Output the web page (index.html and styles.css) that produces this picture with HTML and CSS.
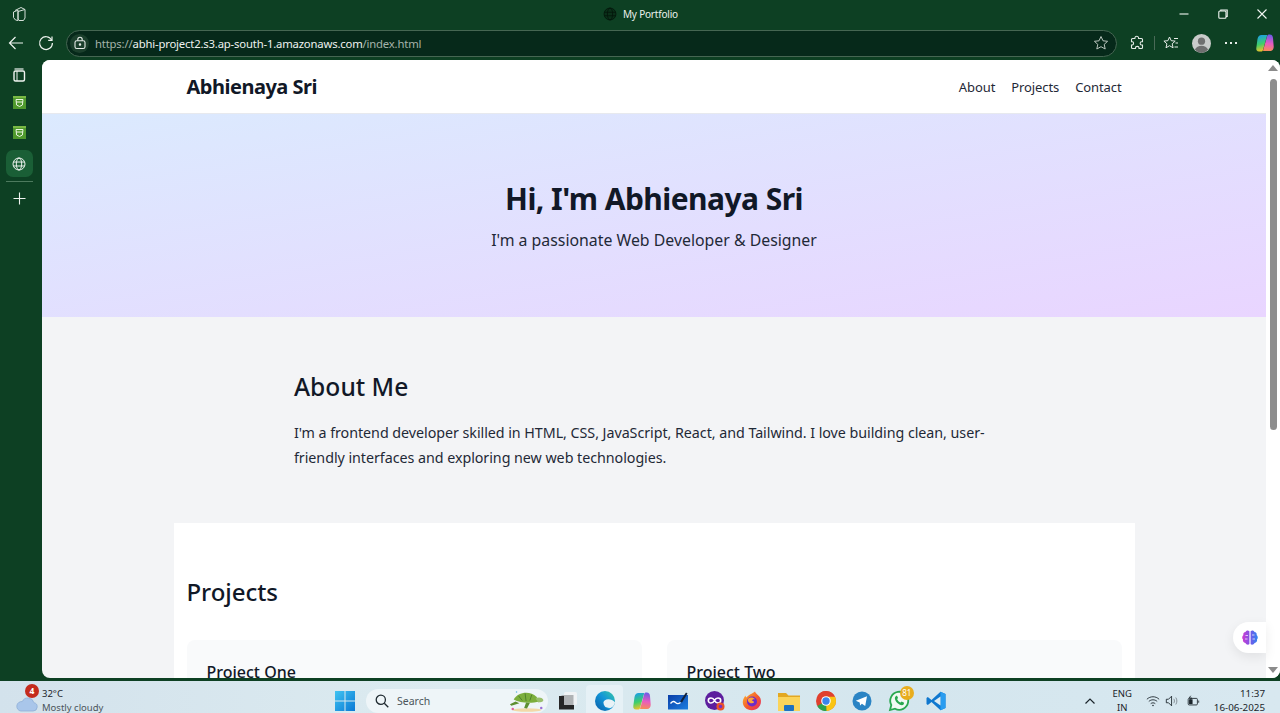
FILE: index.html
```html
<!DOCTYPE html>
<html lang="en">
<head>
<meta charset="utf-8">
<title>My Portfolio</title>
<link rel="stylesheet" href="styles.css">
</head>
<body>
<div class="window">
  <div class="titlebar">
    <div class="title-left">
      <svg class="ic18" viewBox="0 0 18 18" fill="none" stroke="#d5e0d9" stroke-width="1"><path d="M8 6.500l7-2v8.500l-1.500 2.500H9l-1-1.500z"/><path d="M5 5.500l6-3 4 2"/><path d="M3.500 7 8 5.200v10.300l-2.500-.5-2-2.500z"/></svg>
    </div>
    <div class="title-center">
      <svg class="ic14" viewBox="0 0 16 16" fill="#0a3019" stroke="#04170b" stroke-width="1"><circle cx="8" cy="8" r="6.800"/><ellipse cx="8" cy="8" rx="3" ry="6.800" fill="none"/><path d="M1.500 6h13M1.500 10h13" fill="none"/></svg>
      <span>My Portfolio</span>
    </div>
    <div class="win-controls">
      <svg class="ic12" viewBox="0 0 12 12" stroke="#f2f6f3" fill="none" stroke-width="1.100"><path d="M1.500 6h9"/></svg>
      <svg class="ic12" viewBox="0 0 12 12" stroke="#f2f6f3" fill="none" stroke-width="1.100"><rect x="1.800" y="3" width="7.200" height="7.200" rx="1"/><path d="M3.800 3V2h6.400v6.400H9"/></svg>
      <svg class="ic12" viewBox="0 0 12 12" stroke="#f2f6f3" fill="none" stroke-width="1.100"><path d="m1.500 1.500 9 9M10.500 1.500l-9 9"/></svg>
    </div>
  </div>
  <div class="toolbar">
    <svg class="ic16 back" viewBox="0 0 16 16" fill="none" stroke="#eef3ef" stroke-width="1.200"><path d="M15 8H1.500M7.500 2 1.500 8l6 6"/></svg>
    <svg class="ic16 reload" viewBox="0 0 16 16" fill="none" stroke="#eef3ef" stroke-width="1.200"><path d="M13.600 5A6.400 6.400 0 1 0 14.400 8"/><path d="M14 1.500V5.300h-3.800"/></svg>
    <div class="address">
      <span class="lock">
        <svg class="ic14" viewBox="0 0 14 14" fill="none" stroke="#e6ece8" stroke-width="1.100"><rect x="2" y="4.800" width="10" height="7.700" rx="1.800"/><path d="M4.800 4.800V3.500a2.200 2.200 0 0 1 4.400 0v1.300"/><circle cx="7" cy="8.600" r=".7" fill="#e6ece8"/></svg>
      </span>
      <span class="url"><span class="dim">https://</span>abhi-project2.s3.ap-south-1.amazonaws.com<span class="dim">/index.html</span></span>
      <svg class="ic16 star" viewBox="0 0 16 16" fill="none" stroke="#b8c4bc" stroke-width="1"><path d="m8 1.500 2 4.300 4.600.5-3.400 3.100 1 4.600L8 11.700l-4.200 2.300 1-4.600L1.400 6.300 6 5.800z"/></svg>
    </div>
    <div class="tools">
      <svg class="ic16" viewBox="0 0 16 16" fill="none" stroke="#e6ece8" stroke-width="1.100"><path d="M6 2.500c.3-1.600 3.200-1.600 3.500 0l.1 1h2.900c.6 0 1 .4 1 1v2.300h-1c-1.800 0-1.800 3.200 0 3.200h1v2.500c0 .6-.4 1-1 1H10v-.8c0-1.800-3.500-1.800-3.500 0v.8H3.500c-.6 0-1-.4-1-1V10H3.300c1.700 0 1.700-3.300 0-3.300H2.500V4.500c0-.6.4-1 1-1h2.400z"/></svg>
      <span class="tool-sep"></span>
      <svg class="ic16" viewBox="0 0 16 16" fill="none" stroke="#e6ece8" stroke-width="1"><path d="m6.500 2 1.700 3.700 4 .4-3 2.700.9 4L6.500 10.700 3 12.800l.9-4-3-2.700 4-.4z"/><path d="M11 3.500h4M12.500 8h2.500M11.500 12h3.500"/></svg>
      <span class="avatar">
        <svg viewBox="0 0 20 20"><circle cx="10" cy="10" r="10" fill="#c9cbca"/><circle cx="10" cy="7.600" r="3.800" fill="#6f6f6f"/><path d="M3 16.700c1.300-3.300 4-4.400 7-4.400s5.700 1.100 7 4.400A9.800 9.800 0 0 1 10 20a9.800 9.800 0 0 1-7-3.300z" fill="#6f6f6f"/></svg>
      </span>
      <span class="dots"><i></i><i></i><i></i></span>
      <svg class="ic20" viewBox="0 0 20 20"><defs><linearGradient id="cpa" x1=".3" y1="0" x2=".5" y2="1"><stop offset="0" stop-color="#1b9de8"/><stop offset=".55" stop-color="#3ecf6a"/><stop offset="1" stop-color="#f7c326"/></linearGradient><linearGradient id="cpb" x1=".6" y1="0" x2=".5" y2="1"><stop offset="0" stop-color="#6a5ae8"/><stop offset=".55" stop-color="#e85bc0"/><stop offset="1" stop-color="#f78a5a"/></linearGradient></defs><path d="M6.500 2H11.500C12 2 12.300 2.300 12 3L8 17C7.700 18 7 18.500 6 18.500H4C2 18.500 1 17 1.300 15L2.500 6C3 3.500 4.500 2 6.500 2z" fill="url(#cpa)"/><path transform="translate(-.8 0)" d="M14 18H9.500C9 18 8.700 17.600 9 17L13 3C13.300 2 14 1.500 15 1.500H15.500C17.500 1.500 18.700 3 18.800 5L19.500 13.500C19.700 16 18 18 16 18z" fill="url(#cpb)"/></svg>
    </div>
  </div>
  <div class="body-row">
    <nav class="sidebar">
      <span class="side-item tabs"><svg class="ic16" viewBox="0 0 16 16" fill="none" stroke="#f0f4f1" stroke-width="1.400"><rect x="3" y="4" width="10.500" height="10" rx="1.500"/><path d="M3.500 2h9" stroke-width="1.200"/><path d="M6 4v10" stroke-width="1"/></svg></span>
      <span class="side-item"><svg class="ic13" viewBox="0 0 13 13"><rect width="13" height="13" fill="#4f9a2c"/><rect width="13" height="2" fill="#79b845"/><path d="M3 3.500h7l-.6 5.500-2.900 1.500L3.600 9z" fill="none" stroke="#eaf5e2" stroke-width="1"/><path d="M3 6h7" stroke="#eaf5e2" stroke-width="1"/></svg></span>
      <span class="side-item third"><svg class="ic13" viewBox="0 0 13 13"><rect width="13" height="13" fill="#4f9a2c"/><rect width="13" height="2" fill="#79b845"/><path d="M3 3.500h7l-.6 5.500-2.900 1.500L3.600 9z" fill="none" stroke="#eaf5e2" stroke-width="1"/><path d="M3 6h7" stroke="#eaf5e2" stroke-width="1"/></svg></span>
      <span class="side-item active"><svg class="ic14" viewBox="0 0 14 14" fill="none" stroke="#eef3ef" stroke-width="1"><circle cx="7" cy="7" r="6"/><ellipse cx="7" cy="7" rx="2.700" ry="6"/><path d="M1.400 5h11.200M1.400 9h11.200"/></svg></span>
      <span class="side-rule"></span>
      <span class="side-item add"><svg class="ic13" viewBox="0 0 13 13" stroke="#eef3ef" stroke-width="1.100"><path d="M6.500.5v12M.5 6.500h12"/></svg></span>
    </nav>
    <div class="viewport">
      <main class="page">
        <header class="site-nav">
          <div class="site-nav-inner">
            <h1 class="brand">Abhienaya Sri</h1>
            <ul class="links"><li>About</li><li>Projects</li><li>Contact</li></ul>
          </div>
        </header>
        <section class="hero">
          <h2>Hi, I'm Abhienaya Sri</h2>
          <p>I'm a passionate Web Developer &amp; Designer</p>
        </section>
        <section class="about">
          <h2>About Me</h2>
          <p>I'm a frontend developer skilled in HTML, CSS, JavaScript, React, and Tailwind. I love building clean, user-friendly interfaces and exploring new web technologies.</p>
        </section>
        <section class="projects">
          <h2>Projects</h2>
          <div class="cards">
            <article class="card"><h3>Project One</h3></article>
            <article class="card"><h3>Project Two</h3></article>
          </div>
        </section>
      </main>
      <div class="scrollbar">
        <span class="arrow up"></span>
        <span class="thumb"></span>
        <span class="arrow down"></span>
      </div>
      <div class="fab">
        <svg class="ic18" viewBox="0 0 18 18"><defs><linearGradient id="br" x1="0" x2="1"><stop offset="0" stop-color="#d23bd0"/><stop offset=".5" stop-color="#7a55e8"/><stop offset="1" stop-color="#2f86f0"/></linearGradient></defs><path d="M8.400 2.200C7 1 5 1.500 4.600 3 3 3 1.800 4.500 2.400 6 1 7 .8 9.500 2 10.600c-.5 1.800.7 3.500 2.500 3.400.5 1.700 2.900 2.400 3.900 1zM9.600 2.200C11 1 13 1.500 13.400 3c1.600 0 2.800 1.500 2.200 3 1.400 1 1.600 3.500.4 4.600.5 1.800-.7 3.500-2.500 3.400-.5 1.700-2.900 2.400-3.900 1z" fill="url(#br)"/><path d="M4.500 6.500h2.500M4 10h2.500M11 6h2.500M11.500 10H14" stroke="#fff" stroke-width=".7"/></svg>
      </div>
    </div>
  </div>
  <div class="taskbar">
    <div class="weather">
      <span class="weather-icon">
        <svg viewBox="0 0 24 18" class="cloud"><path d="M6 17h13a4.500 4.500 0 0 0 .8-8.900A6.500 6.500 0 0 0 7.500 7 5 5 0 0 0 6 17z" fill="#a9c6ea" stroke="#7fa3d0" stroke-width=".6"/></svg>
        <b class="badge-red">4</b>
      </span>
      <span class="weather-text"><span>32°C</span><span class="muted">Mostly cloudy</span></span>
    </div>
    <svg class="winlogo" viewBox="0 0 20 20"><defs><linearGradient id="wl" x1="0" y1="0" x2="1" y2="1"><stop offset="0" stop-color="#40c4f2"/><stop offset="1" stop-color="#0a78d4"/></linearGradient></defs><path fill="url(#wl)" d="M0 0h9.500v9.500H0zM10.500 0H20v9.500h-9.500zM0 10.500h9.500V20H0zM10.500 10.500H20V20h-9.500z"/></svg>
    <div class="search">
      <svg class="ic14" viewBox="0 0 14 14" fill="none" stroke="#1f2a30" stroke-width="1.300"><circle cx="5.800" cy="5.800" r="4.600"/><path d="m9.300 9.300 4 4"/></svg>
      <span>Search</span>
      <svg class="turtle" viewBox="0 0 40 24"><ellipse cx="20" cy="22" rx="15" ry="1.800" fill="#f2d9a8"/><path d="M6 11c4-8 17-10 24-3l3 5c-8 2-20 2-27-2z" fill="#7cae3c"/><path d="M11 7l4 5M18 4.500l1 8M25 6l-2 6" stroke="#4d7f2a" stroke-width="1"/><path d="M29 10c3-2 7-1 8 1s-2 3-5 3z" fill="#9abf6c"/><path d="M8 13l-6 3 1.500 1.500L12 15zM19 14l-2 6 3 .5 3-6z" fill="#5e8f32"/><circle cx="5" cy="21" r="1.300" fill="#e0629b"/><circle cx="35" cy="20" r="1.300" fill="#9a6fd6"/><circle cx="9" cy="3" r=".8" fill="#56b1e0"/></svg>
    </div>
    <div class="apps">
      <span class="app"><svg class="ic20" viewBox="0 0 20 20"><rect x="6" y="1" width="13" height="13" rx="1.500" fill="#f0f3f5"/><rect x="3.500" y="4" width="12" height="11" fill="#b0b3b5"/><path d="M1 5h5v9h10v4.500H1z" fill="#262626"/></svg></span>
      <span class="app current"><svg class="ic22" viewBox="0 0 22 22"><defs><linearGradient id="ed" x1="0" y1="1" x2="1" y2="0"><stop offset="0" stop-color="#0b5ea8"/><stop offset=".55" stop-color="#1396d8"/><stop offset="1" stop-color="#39c9a3"/></linearGradient></defs><circle cx="11" cy="11" r="10" fill="url(#ed)"/><path d="M9.500 12.500c0-2 2.200-3.300 4.800-3.300 2.600 0 5 1 6.700 3-.5 3-2.200 5-4.500 5.800-3.500 1-7-1.500-7-5.500z" fill="#e8f2f6"/><path d="M11.800 17c1.200 2 4.200 2.500 6.500.8-2.500.5-4.700.2-6.500-.8z" fill="#1aa0d8"/></svg></span>
      <span class="app"><svg class="ic20" viewBox="0 0 20 20"><path d="M6.500 2H11.500C12 2 12.300 2.300 12 3L8 17C7.700 18 7 18.500 6 18.500H4C2 18.500 1 17 1.300 15L2.500 6C3 3.500 4.500 2 6.500 2z" fill="url(#cpa)"/><path transform="translate(-.8 0)" d="M14 18H9.500C9 18 8.700 17.600 9 17L13 3C13.300 2 14 1.500 15 1.500H15.500C17.500 1.500 18.700 3 18.800 5L19.500 13.500C19.700 16 18 18 16 18z" fill="url(#cpb)"/></svg></span>
      <span class="app"><svg class="ic20" viewBox="0 0 20 20"><defs><linearGradient id="wb" x1="0" y1="0" x2="1" y2="1"><stop offset="0" stop-color="#0a3fa8"/><stop offset="1" stop-color="#1c7ee0"/></linearGradient></defs><rect y="4" width="20" height="14.500" fill="url(#wb)"/><path d="M2.500 12.500c2-2.500 3.500-2.500 5-1s3 1.500 5 0" fill="none" stroke="#fff" stroke-width="1.300"/><path d="M12 10.500 18 1.500l1.500 1L14 11.500z" fill="#11223a"/></svg></span>
      <span class="app"><svg class="ic20" viewBox="0 0 20 20"><circle cx="9.500" cy="9.500" r="9.500" fill="#5d1f9e"/><path d="M6 7c2 0 3 1.500 3.500 2.500C10 8.500 11 7 13 7c1.600 0 2.700 1.100 2.700 2.500S14.600 12 13 12c-2 0-3-1.500-3.500-2.500C9 10.500 8 12 6 12c-1.600 0-2.700-1.100-2.700-2.500S4.400 7 6 7z" fill="none" stroke="#fff" stroke-width="1.600"/><circle cx="15.500" cy="15.500" r="4" fill="#e9532a"/><circle cx="15.500" cy="15.500" r="1.800" fill="#7a2fc0"/></svg></span>
      <span class="app"><svg class="ic20" viewBox="0 0 20 20"><defs><linearGradient id="ff" x1="0" y1="0" x2="1" y2="1"><stop offset="0" stop-color="#ffbd2e"/><stop offset=".55" stop-color="#f4572d"/><stop offset="1" stop-color="#e32a6d"/></linearGradient></defs><path d="M13 .5c1 2.500 4 3.500 5.500 7 1 3 .5 6.500-2 9-3.500 3.500-10 3.500-13.500 0C0 13.500.3 8.800 2.500 6l1-1.500c0 1 .5 1.500 1.200 2C6 3.500 10.500 3 13 .5z" fill="url(#ff)"/><circle cx="10" cy="10.500" r="5" fill="#6d2bc9"/><path d="M6 8c2-2 5.500-2 7 .5-1.500-.7-2.500 0-3 1 1.200.5 2 1 2 2-1.500 1.500-5 .8-6-1.500z" fill="#ffa436"/></svg></span>
      <span class="app"><svg class="ic22" viewBox="0 0 22 22"><path d="M0 3h8l2.500 2.500H22V8H0z" fill="#e3a822"/><rect y="7" width="22" height="14" fill="#fbd45a"/><rect x="6" y="15" width="10" height="6" rx="1" fill="#1e72c2"/></svg></span>
      <span class="app"><svg class="ic20" viewBox="0 0 20 20"><circle cx="10" cy="10" r="10" fill="#e0402f"/><path d="M10 10 1.300 15a10 10 0 0 0 9.700 5z" fill="#2ca24c"/><path d="M10 5.500h8.900A10 10 0 0 1 10.500 20z" fill="#f9c513"/><path d="M10 5.500h8.900A10 10 0 0 0 1.500 4.700L5.800 12z" fill="#e0402f"/><circle cx="10" cy="10" r="4.800" fill="#fff"/><circle cx="10" cy="10" r="3.700" fill="#3a84ec"/></svg></span>
      <span class="app"><svg class="ic20" viewBox="0 0 20 20"><circle cx="10" cy="10" r="9.500" fill="#2b84c4"/><path d="M3.800 9.800 15 5.300l-1.800 9.700-3.300-2.300-1.800 1.700-.4-3z" fill="#fff"/></svg></span>
      <span class="app"><svg class="ic22" viewBox="0 0 22 22" fill="none"><path d="M2 20l1.300-5A9 9 0 1 1 7 18.700z" stroke="#29a84f" stroke-width="1.800" fill="#f1faf3"/><path d="M7.500 6.500c-1.500 1.500 0 5 2.200 6.800 2.300 2 5 2.700 6 1l.4-1.500-2.500-1.200-1 1c-1.500-.5-3-2-3.500-3.500l1-1-1.200-2.600z" fill="#29a84f"/></svg><b class="badge-gold">81</b></span>
      <span class="app"><svg class="ic20" viewBox="0 0 20 20"><path d="M14.500.8 19.500 3v14l-5 2.200L5.500 11 1.800 14 .5 13V7l1.300-1 3.700 3z" fill="#0f78cf"/><path d="M14.500.8 19.500 3v14l-5 2.200z" fill="#2a9df0"/><path d="M14.500 5.500v9L8 10z" fill="#dcebf3"/></svg></span>
    </div>
    <div class="tray">
      <svg class="chev" viewBox="0 0 12 8" fill="none" stroke="#1b252b" stroke-width="1.200"><path d="m1.500 6.500 4.500-4.500 4.500 4.500"/></svg>
      <span class="lang"><span>ENG</span><span>IN</span></span>
      <svg class="ic14" viewBox="0 0 16 14" fill="none" stroke="#1b252b" stroke-width="1"><path d="M1 5c4-3.800 10-3.800 14 0M3.200 7.500c2.800-2.500 6.800-2.500 9.600 0M5.400 10c1.500-1.200 3.700-1.200 5.200 0"/><circle cx="8" cy="12.200" r=".9" fill="#1b252b" stroke="none"/></svg>
      <svg class="ic14" viewBox="0 0 16 14" fill="none" stroke="#1b252b" stroke-width="1"><path d="M1.500 5h2.500l3.500-3.500v11L4 9H1.500z"/><path d="M10 4.500c1 1.500 1 3.500 0 5M12.300 3c1.700 2.500 1.700 5.500 0 8" stroke="#7b858a"/></svg>
      <svg class="ic14 battery" viewBox="0 0 16 14" fill="none" stroke="#1b252b" stroke-width="1"><rect x="2.500" y="4" width="10.500" height="7.500" rx="1.200"/><rect x="3.500" y="5" width="4" height="5.500" fill="#1b252b" stroke="none"/><path d="M14.500 6.500v2.500M5.500 1 3.500 3.500h3L5 5.500" stroke-width=".9"/></svg>
      <span class="clock"><span>11:37</span><span>16-06-2025</span></span>
    </div>
  </div>
</div>
</body>
</html>
```
FILE: styles.css
```css
* { box-sizing: border-box; margin: 0; padding: 0; }
html, body { height: 100%; overflow: hidden; }
body { font-family: "Noto Sans", "Open Sans", sans-serif; color: #111827; }
svg { display: block; flex: none; }
.ic12 { width: 12px; height: 12px; }
.ic13 { width: 13px; height: 13px; }
.ic14 { width: 14px; height: 14px; }
.ic16 { width: 16px; height: 16px; }
.ic18 { width: 18px; height: 18px; }
.ic20 { width: 20px; height: 20px; }
.ic22 { width: 22px; height: 22px; }

.window { width: 1280px; height: 713px; display: flex; flex-direction: column; background: #0d4023; }

.titlebar { height: 28px; flex: none; display: flex; align-items: center; position: relative; }
.title-left { padding-left: 10px; }
.title-center { position: absolute; left: 603px; top: 6px; display: flex; align-items: center; gap: 6px; color: #eaf0ec; font-size: 10px; letter-spacing: -0.2px; line-height: 16px; }
.win-controls { margin-left: auto; display: flex; gap: 27px; padding-right: 12px; }

.toolbar { height: 30px; flex: none; display: flex; align-items: center; }
.back { margin-left: 8px; }
.reload { margin-left: 14px; }
.address { margin-left: 12px; width: 1051px; height: 27px; border: 1px solid #456652; border-radius: 14px; background: #06291a; display: flex; align-items: center; padding-left: 3px; padding-right: 7px; }
.lock { width: 19px; height: 19px; border-radius: 10px; background: #1b3f2c; display: flex; align-items: center; justify-content: center; }
.url { margin-left: 6px; font-size: 11.300px; letter-spacing: -0.18px; color: #eef2ef; white-space: nowrap; flex: 1; }
.dim { color: #a4b2a9; }
.tools { display: flex; align-items: center; margin-left: 12px; }
.tool-sep { width: 1px; height: 14px; background: #4a6a57; margin: 0 8px 0 9px; }
.avatar { width: 19px; height: 19px; margin-left: 13px; }
.dots { display: flex; gap: 3px; margin-left: 14px; width: 24px; }
.dots i { width: 2px; height: 2px; background: #e6ece8; display: block; }
.tools .ic20 { margin-left: 6px; }

.body-row { flex: 1; display: flex; min-height: 0; }
.sidebar { width: 42px; flex: none; display: flex; flex-direction: column; align-items: center; padding: 3px 4px 0 0; }
.side-item { width: 27px; height: 27px; margin-bottom: 3px; display: flex; align-items: center; justify-content: center; border-radius: 7px; }
.side-item.tabs { height: 28px; margin-bottom: 0; }
.side-item.third { margin-bottom: 4px; }
.side-item.active { background: #1a5f36; }
.side-rule { width: 27px; height: 1px; background: #4d7a5e; margin-top: 1px; margin-bottom: 2px; }
.side-item.add { margin-top: 1px; }

.viewport { flex: 1; min-width: 0; display: flex; height: 618px; margin-top: 2px; border-radius: 8px; overflow: hidden; position: relative; background: #f3f4f6; }
.page { flex: 1; min-width: 0; overflow: hidden; }
.scrollbar { width: 14px; flex: none; background: #fff; display: flex; flex-direction: column; align-items: center; padding: 5px 0; }
.arrow { width: 0; height: 0; border-left: 5px solid transparent; border-right: 5px solid transparent; flex: none; }
.arrow.up { border-bottom: 6px solid #8b8b8b; }
.arrow.down { border-top: 6px solid #8b8b8b; margin-top: auto; }
.thumb { width: 7px; height: 351px; background: #8d8d8d; border-radius: 4px; margin-top: 8px; }
.fab { position: absolute; right: 14px; top: 562px; width: 33px; height: 31px; background: #fff; border-radius: 16px 0 0 16px; display: flex; align-items: center; justify-content: center; box-shadow: 0 4px 12px rgba(0,0,0,.08); }

.site-nav { height: 54px; background: #fff; border-bottom: 1px solid #e7e9ee; }
.site-nav-inner { width: 961px; height: 53px; margin: 0 auto; padding: 1px 13px 0; display: flex; align-items: center; justify-content: space-between; }
.brand { font-size: 20px; font-weight: 700; letter-spacing: -0.5px; line-height: 28px; color: #111827; }
.links { list-style: none; display: flex; gap: 16px; font-size: 13px; letter-spacing: -0.1px; color: #1f2937; }

.hero { height: 203px; background: linear-gradient(to bottom right, #dbeafe, #e9d5ff); text-align: center; padding-top: 65px; }
.hero h2 { font-size: 30px; font-weight: 700; letter-spacing: -0.55px; line-height: 40px; color: #111827; }
.hero p { font-size: 15.850px; line-height: 26px; margin-top: 8px; color: #1f2937; }

.about { width: 720px; margin: 0 auto; padding-top: 53px; height: 206px; }
.about h2 { font-size: 24.600px; font-weight: 500; line-height: 34px; }
.about p { font-size: 14.300px; letter-spacing: -0.05px; line-height: 25px; margin-top: 16px; color: #1f2937; }

.projects { width: 961px; margin: 0 auto; background: #fff; padding: 49px 13px 0; }
.projects h2 { font-size: 24px; font-weight: 500; line-height: 40px; letter-spacing: -0.05px; }
.cards { display: grid; grid-template-columns: 1fr 1fr; gap: 25px; margin-top: 28px; }
.card { background: #f9fafb; border-radius: 8px; padding: 20px; height: 200px; }
.card h3 { font-size: 16px; font-weight: 500; line-height: 24px; }

.taskbar { height: 32px; flex: none; margin-top: 3px; padding-top: 8px; display: flex; align-items: center; background: linear-gradient(90deg, #d3e2ec, #dcebf0 35%, #d4e6ee 70%, #d8e8f0); color: #1b252b; overflow: hidden; }
.weather { width: 335px; flex: none; display: flex; align-items: center; padding-left: 15px; gap: 4px; }
.weather-icon { position: relative; width: 23px; height: 24px; display: block; }
.cloud { position: absolute; left: 0; top: 6px; width: 23px; height: 17px; }
.badge-red { position: absolute; left: 10px; top: -5px; width: 14px; height: 14px; border-radius: 7px; background: #c42b1c; color: #fff; font-size: 8.500px; line-height: 14px; text-align: center; }
.weather-text { display: flex; flex-direction: column; font-size: 9.500px; line-height: 14px; }
.muted { color: #4b555b; }
.winlogo { width: 20px; height: 20px; margin-right: 11px; }
.search { width: 182px; height: 24px; flex: none; border-radius: 12px; background: #eef5f8; display: flex; align-items: center; padding-left: 9px; gap: 8px; font-size: 10.500px; color: #4b555b; position: relative; }
.turtle { width: 38px; height: 23px; position: absolute; right: 2px; top: 0; }
.apps { display: flex; align-items: center; margin-left: 1.600px; height: 32px; flex: none; }
.app { width: 36.800px; height: 32px; display: flex; align-items: center; justify-content: center; position: relative; }
.app.current { background: #e6f1f6; border-radius: 4px; }
.badge-gold { position: absolute; left: 19px; top: 1px; width: 14px; height: 14px; border-radius: 7px; background: #e8ad1e; color: #fff; font-size: 8px; font-weight: 400; line-height: 14px; text-align: center; }
.tray { display: flex; align-items: center; margin-left: auto; padding-right: 15px; gap: 5px; }
.chev { width: 12px; height: 8px; margin-right: 11px; }
.lang { display: flex; flex-direction: column; align-items: center; font-size: 9.500px; line-height: 14px; margin-right: 9px; }
.battery { margin-left: 2px; }
.clock { display: flex; flex-direction: column; align-items: flex-end; font-size: 9.800px; line-height: 14px; margin-left: 9px; }
```
